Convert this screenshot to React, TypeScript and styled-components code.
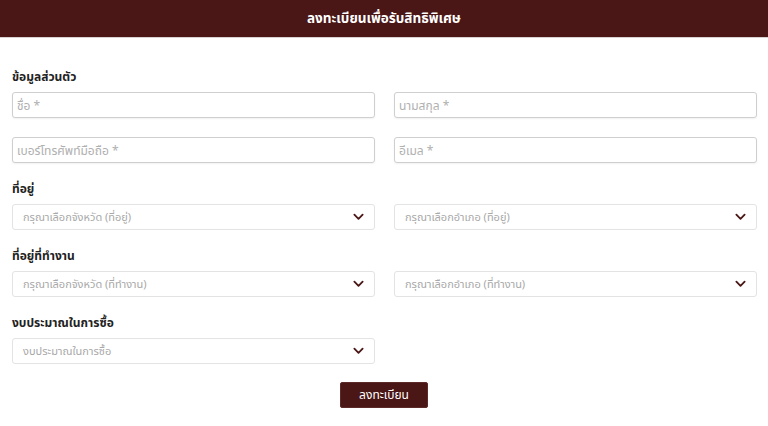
import React from "react";
import styled, { createGlobalStyle } from "styled-components";

const Global = createGlobalStyle`
  html, body { margin: 0; padding: 0; background: #fff; }
  body { font-family: "Noto Sans", "Noto Sans Thai", "DejaVu Sans", sans-serif; color: #222; }
  * { box-sizing: border-box; }
`;

const Header = styled.header`
  height: 38px;
  background: #4a1616;
  border-bottom: 1px solid #d9d2d2;
  display: flex;
  align-items: center;
  justify-content: center;
  color: #fff;
  font-size: 13.5px;
  font-weight: 700;
`;

const Form = styled.form`
  padding: 31px 11px 0 12px;
  display: flex;
  flex-direction: column;
`;

const SectionTitle = styled.div`
  font-size: 12px;
  font-weight: 700;
  color: #222;
  line-height: 16px;
  margin-bottom: 7px;
`;

const Grid = styled.div`
  display: grid;
  grid-template-columns: 363px 363px;
  column-gap: 19px;
  row-gap: 19px;
  margin-bottom: 18px;
`;

const Input = styled.input`
  height: 26px;
  width: 100%;
  border: 1px solid #cfcfcf;
  border-radius: 3px;
  padding: 0 4px;
  font-family: inherit;
  font-size: 12px;
  color: #333;
  box-shadow: 0 1px 2px rgba(0,0,0,0.06);
  outline: none;
  &::placeholder { color: #b0b0b0; }
`;

const SelectBox = styled.div`
  height: 26px;
  width: 100%;
  border: 1px solid #e3e3e3;
  border-radius: 3px;
  padding: 0 10px 0 10px;
  display: flex;
  align-items: center;
  justify-content: space-between;
  font-size: 11px;
  color: #a8a8a8;
  background: #fff;
`;

const Chevron = styled.svg`
  width: 11px;
  height: 8px;
`;

const ButtonRow = styled.div`
  display: flex;
  justify-content: center;
  padding-top: 0;
  padding-right: 1px;
`;

const Submit = styled.button`
  width: 88px;
  height: 26px;
  background: #4a1616;
  color: #fff;
  border: 1px solid #5d2a2a;
  border-radius: 2px;
  font-family: inherit;
  font-size: 12px;
  cursor: pointer;
`;

const Select = ({ label }: { label: string }) => (
  <SelectBox>
    <span>{label}</span>
    <Chevron viewBox="0 0 12 8">
      <path d="M1.5 1.5 L6 6 L10.5 1.5" fill="none" stroke="#4a1616" strokeWidth="2" strokeLinecap="round" strokeLinejoin="round" />
    </Chevron>
  </SelectBox>
);

export default function App() {
  return (
    <>
      <Global />
      <Header>ลงทะเบียนเพื่อรับสิทธิพิเศษ</Header>
      <Form onSubmit={(e) => e.preventDefault()}>
        <SectionTitle>ข้อมูลส่วนตัว</SectionTitle>
        <Grid>
          <Input placeholder="ชื่อ *" />
          <Input placeholder="นามสกุล *" />
          <Input placeholder="เบอร์โทรศัพท์มือถือ *" />
          <Input placeholder="อีเมล *" />
        </Grid>
        <SectionTitle>ที่อยู่</SectionTitle>
        <Grid>
          <Select label="กรุณาเลือกจังหวัด (ที่อยู่)" />
          <Select label="กรุณาเลือกอำเภอ (ที่อยู่)" />
        </Grid>
        <SectionTitle>ที่อยู่ที่ทำงาน</SectionTitle>
        <Grid>
          <Select label="กรุณาเลือกจังหวัด (ที่ทำงาน)" />
          <Select label="กรุณาเลือกอำเภอ (ที่ทำงาน)" />
        </Grid>
        <SectionTitle>งบประมาณในการซื้อ</SectionTitle>
        <Grid>
          <Select label="งบประมาณในการซื้อ" />
        </Grid>
        <ButtonRow>
          <Submit type="submit">ลงทะเบียน</Submit>
        </ButtonRow>
      </Form>
    </>
  );
}
